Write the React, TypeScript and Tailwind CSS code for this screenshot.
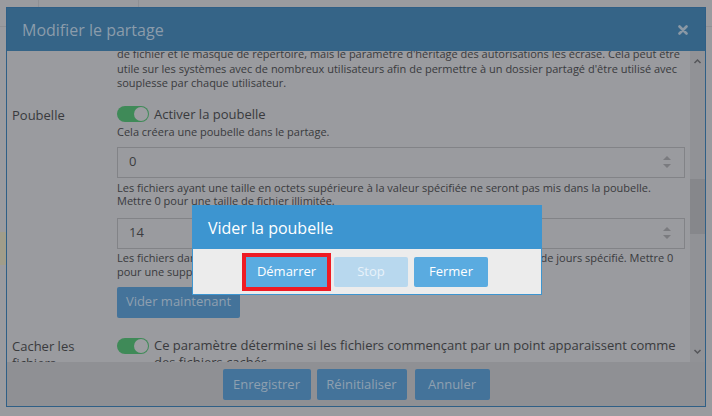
import React from "react";

const font = { fontFamily: '"Open Sans", "Liberation Sans", sans-serif' };

function Toggle() {
  return (
    <div className="relative w-[32px] h-[16px] rounded-full bg-[#3f8a58] shrink-0">
      <div className="absolute right-[1px] top-[1px] w-[14px] h-[14px] rounded-full bg-[#9c9da1]" />
    </div>
  );
}

function Spinner() {
  return (
    <svg width="10" height="14" viewBox="0 0 10 14" className="shrink-0">
      <path d="M1 5 L5 1 L9 5 Z" fill="#7a7b7f" />
      <path d="M1 9 L5 13 L9 9 Z" fill="#7a7b7f" />
    </svg>
  );
}

function NumInput({ value }: { value: string }) {
  return (
    <div className="h-[31px] border border-[#828387] flex items-center justify-between pl-[11px] pr-[12px] text-[13px] text-[#3c3d40]">
      <span>{value}</span>
      <Spinner />
    </div>
  );
}

export default function App() {
  return (
    <div className="relative w-[712px] h-[416px] overflow-hidden bg-[#9a9b9f]" style={font}>
      {/* background page lines behind overlay */}
      <div className="absolute left-[38px] top-0 w-px h-[7px] bg-[#8f9094]" />
      <div className="absolute left-[138px] top-0 w-px h-[7px] bg-[#8f9094]" />
      <div className="absolute left-0 top-[26px] w-[6px] h-px bg-[#8f9094]" />
      <div className="absolute right-0 top-[26px] w-[6px] h-px bg-[#8f9094]" />
      <div className="absolute left-0 top-[232px] w-[6px] h-[33px] bg-[#a09d8a]" />

      {/* outer modal */}
      <div className="absolute left-[6px] top-[7px] w-[700px] h-[400px] border border-[#2f5f86] flex flex-col overflow-hidden">
        <div className="h-[43px] shrink-0 bg-[#356487] flex items-center justify-between pl-[15px] pr-[17px]">
          <span className="text-[16px] text-[#8b9cab] mt-[1px]">Modifier le partage</span>
          <svg width="10" height="10" viewBox="0 0 10 10" className="mt-[1px]">
            <path d="M1.5 1.5 L8.5 8.5 M8.5 1.5 L1.5 8.5" stroke="#8a98a5" strokeWidth="2.6" strokeLinecap="round" />
          </svg>
        </div>

        <div className="flex-1 flex min-h-0 bg-[#9a9b9f]">
          <div className="flex-1 overflow-hidden pl-[5px] pr-[5px] text-[#393a3d]">
            <div className="-mt-[4px] grid grid-cols-[105px_1fr]">
              <div />
              <p className="text-[11px] leading-[14.5px]">
                de fichier et le masque de répertoire, mais le paramètre d'héritage des autorisations les écrase. Cela peut être utile sur les systèmes avec de nombreux utilisateurs afin de permettre à un dossier partagé d'être utilisé avec souplesse par chaque utilisateur.
              </p>

              <div className="mt-[15px] text-[13px] leading-[16px] pt-[1px]">Poubelle</div>
              <div className="mt-[15px]">
                <div className="flex items-center gap-[5px]">
                  <Toggle />
                  <span className="text-[13px] leading-[16px]">Activer la poubelle</span>
                </div>
                <p className="text-[11px] leading-[14px] mt-[3px]">Cela créera une poubelle dans le partage.</p>
                <div className="mt-[8px]">
                  <NumInput value="0" />
                </div>
                <p className="text-[11px] leading-[13.5px] mt-[3px]">
                  Les fichiers ayant une taille en octets supérieure à la valeur spécifiée ne seront pas mis dans la poubelle.
                  <br />
                  Mettre 0 pour une taille de fichier illimitée.
                </p>
                <div className="mt-[10px]">
                  <NumInput value="14" />
                </div>
                <p className="text-[11px] leading-[14px] mt-[2px]">
                  Les fichiers dans la poubelle seront supprimés automatiquement après le nombre de jours spécifié. Mettre 0
                  <br />
                  pour une suppression désactivée.
                </p>
                <button className="mt-[8px] h-[31px] w-[123px] rounded-[2px] bg-[#44739a] text-[13px] text-[#8fa0b0]">
                  Vider maintenant
                </button>
              </div>

              <div className="mt-[20px] text-[13px] leading-[17px]">Cacher les fichiers</div>
              <div className="mt-[20px] flex items-start gap-[5px]">
                <Toggle />
                <span className="text-[13px] leading-[17px] -mt-[1px]">
                  Ce paramètre détermine si les fichiers commençant par un point apparaissent comme des fichiers cachés.
                </span>
              </div>
            </div>
          </div>

          {/* scrollbar */}
          <div className="w-[15px] shrink-0 bg-[#919296] flex flex-col items-center">
            <svg width="9" height="6" viewBox="0 0 9 6" className="mt-[7px]">
              <path d="M1.5 5 L4.5 2 L7.5 5" stroke="#55565a" strokeWidth="1.5" fill="none" />
            </svg>
            <div className="mt-[115px] w-full h-[55px] bg-[#86878b]" />
            <div className="flex-1" />
            <svg width="9" height="6" viewBox="0 0 9 6" className="mb-[7px]">
              <path d="M1.5 1 L4.5 4 L7.5 1" stroke="#55565a" strokeWidth="1.5" fill="none" />
            </svg>
          </div>
        </div>

        <div className="h-[44px] shrink-0 bg-[#8f9094] flex items-center justify-center gap-[6px] pt-[1px]">
          <button className="h-[31px] w-[88px] rounded-[2px] bg-[#44739a] text-[13px] text-[#8fa0b0]">Enregistrer</button>
          <button className="h-[31px] w-[90px] rounded-[2px] bg-[#44739a] text-[13px] text-[#8fa0b0]">Réinitialiser</button>
          <button className="ml-[2px] h-[31px] w-[75px] rounded-[2px] bg-[#44739a] text-[13px] text-[#8fa0b0]">Annuler</button>
        </div>
      </div>

      {/* inner dialog */}
      <div className="absolute left-[192px] top-[205px] w-[350px] h-[90px] border border-[#3d95d0] flex flex-col bg-[#ececec]">
        <div className="h-[43px] bg-[#3d95d0] flex items-center pl-[15px]">
          <span className="text-[16px] text-white">Vider la poubelle</span>
        </div>
        <div className="flex-1 flex items-center pl-[49px]">
          <div className="border-[4px] border-[#ee1c25]">
            <button className="h-[30px] w-[81px] bg-[#5aabe0] text-[13px] text-white block">Démarrer</button>
          </div>
          <button className="ml-[3px] h-[30px] w-[74px] rounded-[2px] bg-[#b8d8ee] text-[13px] text-[#e8f2fa]">Stop</button>
          <button className="ml-[6px] h-[30px] w-[74px] rounded-[2px] bg-[#5aabe0] text-[13px] text-white">Fermer</button>
        </div>
      </div>
    </div>
  );
}
